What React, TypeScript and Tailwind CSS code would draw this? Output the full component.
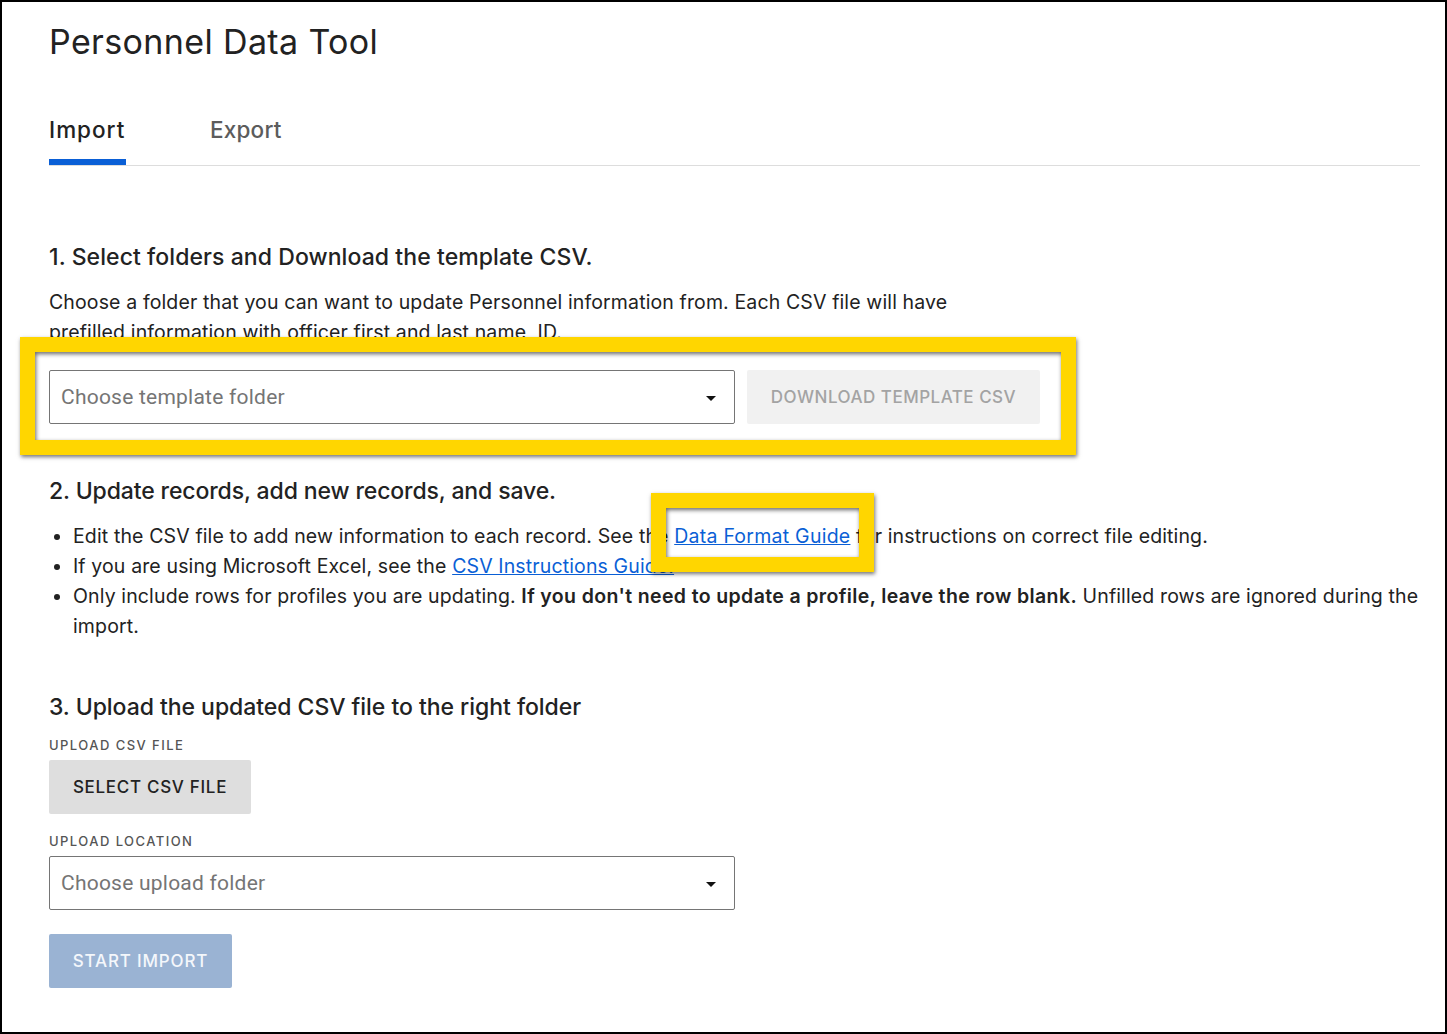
const sans = "font-['Inter','Liberation_Sans',sans-serif]";

function Caret() {
  return (
    <svg width="10" height="5" viewBox="0 0 10 5" className="absolute right-[18px] top-[25px]">
      <path d="M0 0h10L5 5z" fill="#111" />
    </svg>
  );
}

function Select({ text }: { text: string }) {
  return (
    <div className="relative flex h-[54px] w-[686px] items-center rounded-[2px] border border-[#757575] bg-white pl-[11px] font-['Roboto',sans-serif] text-[21px] tracking-[0.23px] text-[#757575]">
      {text}
      <Caret />
    </div>
  );
}

function Action({ text, className }: { text: string; className: string }) {
  return (
    <div className={`flex h-[54px] items-center justify-center rounded-[2px] text-[17px] font-medium ${className}`}>
      {text}
    </div>
  );
}

function Heading({ text, className }: { text: string; className: string }) {
  return <h2 className={`h-[30px] text-[23px] leading-[30px] font-medium text-[#222] ${className}`}>{text}</h2>;
}

function Label({ text, className }: { text: string; className: string }) {
  return <div className={`h-[20px] text-[13px] leading-[20px] font-medium tracking-[1.45px] text-[#555] ${className}`}>{text}</div>;
}

export default function App() {
  return (
    <div className={`relative h-[1034px] w-[1447px] overflow-hidden border-2 border-black bg-white pl-[47px] pr-[25px] text-[19.5px] leading-[30px] tracking-[0.13px] text-[#222] ${sans}`}>
      <h1 className="mt-[20px] h-[40px] text-[34px] leading-[40px] font-normal tracking-[0.37px] text-[#222]">Personnel Data Tool</h1>

      <div className="mt-[53px] flex h-[51px] gap-[84px] border-b border-[#dddddd] text-[22.5px] font-medium">
        <div className="h-[50px] w-[77px] border-b-[6px] border-[#0A5FD6] tracking-[1px] text-[#222]">Import</div>
        <div className="tracking-[0.2px] text-[#5c5c5c]">Export</div>
      </div>

      <Heading text="1. Select folders and Download the template CSV." className="mt-[76px] tracking-[0.08px]" />
      <p className="mt-[15px] w-[920px]">
        Choose a folder that you can want to update Personnel information from. Each CSV file will have prefilled information with officer first and last name, ID.
      </p>
      <div className="mt-[23px] flex gap-[12px]">
        <Select text="Choose template folder" />
        <Action text="DOWNLOAD TEMPLATE CSV" className="w-[293px] bg-[#f1f1f1] tracking-[0.5px] text-[#a3a3a3]" />
      </div>

      <Heading text="2. Update records, add new records, and save." className="mt-[52px] tracking-[-0.12px]" />
      <ul className="mt-[15px] list-disc pl-[24px]">
        <li>Edit the CSV file to add new information to each record. See the <span className="tracking-[0.25px] text-[#0A5FD6] underline">Data Format Guide</span> for instructions on correct file editing.</li>
        <li>If you are using Microsoft Excel, see the <span className="text-[#0A5FD6] underline">CSV Instructions Guide.</span></li>
        <li>Only include rows for profiles you are updating. <b className="font-semibold tracking-[0.37px]">If you don't need to update a profile, leave the row blank.</b> Unfilled rows are ignored during the import.</li>
      </ul>

      <Heading text="3. Upload the updated CSV file to the right folder" className="mt-[51px] tracking-[-0.04px]" />
      <Label text="UPLOAD CSV FILE" className="mt-[13px]" />
      <Action text="SELECT CSV FILE" className="mt-[5px] w-[202px] bg-[#dedede] tracking-[0.7px] text-[#222]" />
      <Label text="UPLOAD LOCATION" className="mt-[17px]" />
      <div className="mt-[5px]"><Select text="Choose upload folder" /></div>
      <Action text="START IMPORT" className="mt-[24px] w-[183px] bg-[#9ab3d3] tracking-[0.83px] text-[#f4f7fb]" />

      <div className="absolute left-[18px] top-[335px] h-[118px] w-[1056px] border-[15px] border-[#FFD600] shadow-[1px_2px_4px_rgba(0,0,0,0.55),inset_1px_2px_4px_rgba(0,0,0,0.6)]" />
      <div className="absolute left-[649px] top-[491px] h-[79px] w-[223px] border-[15px] border-[#FFD600] shadow-[1px_2px_4px_rgba(0,0,0,0.55),inset_1px_2px_4px_rgba(0,0,0,0.6)]" />
    </div>
  );
}
